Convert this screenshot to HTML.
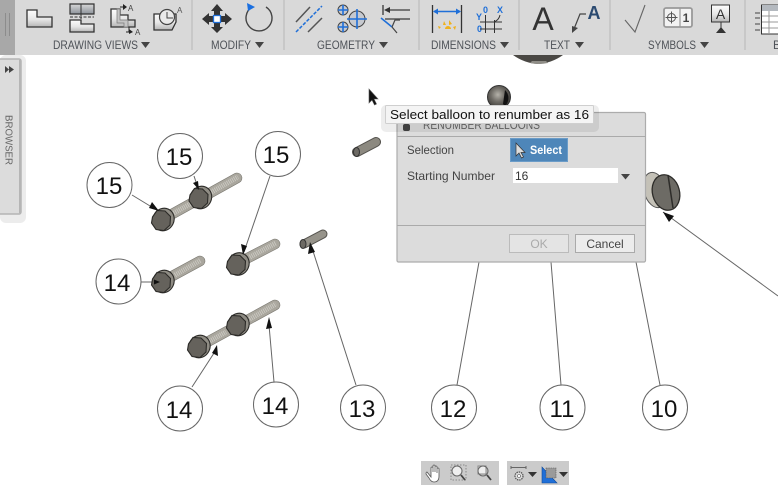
<!DOCTYPE html>
<html lang="en"><head><meta charset="utf-8"><title>Renumber Balloons</title>
<style>
html,body{margin:0;padding:0;background:#fff;width:778px;height:489px;overflow:hidden}
svg{display:block;font-family:"Liberation Sans",sans-serif}
.lb{font-size:11.5px;fill:#4e5258}
.n{font-size:24px;fill:#111;text-anchor:middle}
.c{fill:#fff;stroke:#666;stroke-width:1}
.l{stroke:#666;stroke-width:1;fill:none}
.i{stroke:#333;stroke-width:1.3;fill:url(#g)}
.b{stroke:#1f6fd8;stroke-width:1.6;fill:none}
.sh{stroke:#a9a69d;stroke-width:9.5;stroke-linecap:round;fill:none}
.sd{stroke:#75736c;stroke-width:10.5;stroke-linecap:round;fill:none}
.th{stroke:#c9c7c0;stroke-width:5;stroke-dasharray:1 1;fill:none}
.d{font-size:12px;fill:#444}
</style></head><body>
<svg width="778" height="489" viewBox="0 0 778 489" xmlns="http://www.w3.org/2000/svg">
<defs>
<linearGradient id="g" x1="0" y1="0" x2="0" y2="1"><stop offset="0" stop-color="#fdfdfd"/><stop offset=".55" stop-color="#e6e6e6"/><stop offset="1" stop-color="#b5b5b5"/></linearGradient>
<linearGradient id="g2" x1="0" y1="0" x2="0" y2="1"><stop offset="0" stop-color="#d8d8d8"/><stop offset="1" stop-color="#8d939b"/></linearGradient>
<radialGradient id="ball" cx=".45" cy=".4" r=".6"><stop offset="0" stop-color="#b5b2aa"/><stop offset=".5" stop-color="#6f6c66"/><stop offset="1" stop-color="#3c3a36"/></radialGradient>
<g id="head">
<ellipse cx="1.500" cy="-.5" rx="10.500" ry="11.500" transform="rotate(25 1.500 -.5)" fill="#8f8c84" stroke="#2c2b28" stroke-width="1.100"/>
<path d="M-9.500-3-5-9.500 3-9 8.500-3.500 8 5 2 10.500-6 9.500-10.500 3Z" fill="#65625c" stroke="#2c2b28" stroke-width="1.100"/>
</g>
</defs>

<!-- toolbar -->
<rect x="0" y="0" width="778" height="55" fill="#d9d9d9"/>
<rect x="0" y="0" width="15" height="55" fill="#a8a8a8"/>
<path d="M5.500 13V36M9.500 13V36" stroke="#8c8c8c" stroke-width="1"/>
<path d="M192 0V50M284 0V50M419 0V50M519 0V50M610 0V50M745 0V50" stroke="#c2c2c2" stroke-width="1.500"/>

<!-- drawing views -->
<path class="i" d="M27 10H37V17H52V27H27Z"/>
<path d="M70 4H94V14H70Z" fill="url(#g2)" stroke="#333" stroke-width="1.200"/><path d="M81 4V14" stroke="#333"/>
<path d="M70 17H94" stroke="#333" stroke-dasharray="3 1.500"/><path d="M81 14V20" stroke="#333" stroke-dasharray="2 1"/>
<path class="i" d="M70 20H81V24H94V32H70Z"/>
<path class="i" d="M111 9H120V15H128V20H135V27H111Z"/>
<path d="M117 9H120V20H128V27H124V23H117Z" fill="#c5c5c5" stroke="#777" stroke-width=".7"/>
<path d="M120 7H125M126 32H129V27" stroke="#222" fill="none"/><path d="M123 4 127 7 123 10ZM129 29 133 32 129 34Z" fill="#222"/>
<text x="128" y="11" font-size="8" fill="#444">A</text><text x="135" y="35" font-size="8" fill="#444">A</text>
<path class="i" d="M154 14H176V22L172 30H154Z"/>
<circle cx="167" cy="17" r="7.500" fill="#e9e9e9" stroke="#444" stroke-width="1.200"/><path d="M167 12V18H173" stroke="#444" fill="none"/>
<text x="177" y="13" font-size="8" fill="#555">A</text>
<text class="lb" x="53" y="49" textLength="85" lengthAdjust="spacingAndGlyphs">DRAWING VIEWS</text><path d="M141 42H150L145.500 48Z" fill="#444"/>

<!-- modify -->
<path d="M217 4 223 11H220V27H223L217 33 211 27H214V11H211Z" fill="#333"/>
<path d="M202 19 209 13V16H225V13L232 19 225 25V22H209V25Z" fill="#333"/>
<rect x="213.500" y="15.500" width="7" height="7" fill="#fff" stroke="#1f6fd8" stroke-width="1.300"/>
<path d="M252 7A13 13 0 1 0 266 7" fill="none" stroke="#444" stroke-width="1.400"/>
<path d="M247 3 255 7 248 11Z" fill="#1a6fe0"/>
<text class="lb" x="211" y="49" textLength="40" lengthAdjust="spacingAndGlyphs">MODIFY</text><path d="M255 42H264L259.500 48Z" fill="#444"/>

<!-- geometry -->
<path d="M296 22 310 7M308 32 322 18" stroke="#555" stroke-width="1.500"/>
<path d="M296 32 322 6" stroke="#1f6fd8" stroke-width="1.500" stroke-dasharray="3.500 1.500"/>
<g fill="#c6c9cf" stroke="#444"><circle cx="343" cy="10" r="5"/><circle cx="343" cy="27" r="5"/><circle cx="357" cy="19" r="8"/></g>
<path class="b" d="M338 10H348M343 5V15M338 27H348M343 22V32M347 19H367M357 9V29"/>
<path d="M383 5V15" stroke="#444" stroke-width="1.400"/><path d="M388 10H410M385 19H410" stroke="#555" stroke-width="1.400"/><path d="M384 10 390 7V13Z" fill="#333"/>
<path class="b" d="M381 18 392 27"/><path d="M392 27 397 33M392 27 395 20H400" stroke="#444" stroke-width="1.200" fill="none"/>
<text class="lb" x="317" y="49" textLength="58" lengthAdjust="spacingAndGlyphs">GEOMETRY</text><path d="M379 42H388L383.500 48Z" fill="#444"/>

<!-- dimensions -->
<path d="M432.500 5V33M461.500 5V33" stroke="#333" stroke-width="1.300"/>
<path d="M434 11.500H460" stroke="#1f6fd8" stroke-width="1.500"/><path d="M433 11.500 438 8.500V14.500ZM461 11.500 456 8.500V14.500Z" fill="#1f6fd8"/>
<path d="M439 29 438 26 441 27ZM443 25 444 21 446 25ZM449 25 449 20 452 24ZM453 27 456 26 455 30ZM445 29A3 3 0 0 1 451 29Z" fill="#efb11c"/>
<g font-size="9" font-weight="bold" fill="#1f6fd8"><text x="483" y="13">0</text><text x="497" y="13">X</text><text x="476" y="20">Y</text><text x="477" y="32">0</text></g>
<path d="M485.500 15V33M494.500 20V33M480 22H502M480 29H502M494 22Q499 20 500 15" stroke="#333" fill="none"/>
<text class="lb" x="431" y="49" textLength="65" lengthAdjust="spacingAndGlyphs">DIMENSIONS</text><path d="M500 42H509L504.500 48Z" fill="#444"/>

<!-- text -->
<text x="543" y="30" font-size="32" fill="#333" text-anchor="middle">A</text>
<text x="594" y="19" font-size="18" font-weight="bold" fill="#2b4a70" text-anchor="middle">A</text>
<path d="M586 14H580L574 29" stroke="#444" stroke-width="1.200" fill="none"/><path d="M572 33 572 26 578 28Z" fill="#444"/>
<text class="lb" x="544" y="49" textLength="26" lengthAdjust="spacingAndGlyphs">TEXT</text><path d="M575 42H584L579.500 48Z" fill="#444"/>

<!-- symbols -->
<path d="M625 20 635 32 645 5" stroke="#666" stroke-width="1.100" fill="none"/>
<rect x="664" y="8" width="28" height="19" rx="2" fill="#f2f2f2" stroke="#999" stroke-width="1.800"/><path d="M680 8V27" stroke="#999" stroke-width="1.200"/>
<circle cx="671.500" cy="17.500" r="4" fill="none" stroke="#555"/><path d="M665.500 17.500H677.500M671.500 11.500V23.500" stroke="#555"/>
<text x="686" y="22" font-size="12" font-weight="bold" fill="#444" text-anchor="middle">1</text>
<rect x="711.500" y="5" width="18" height="17" fill="url(#g)" stroke="#333"/><text x="720.500" y="19" font-size="14" fill="#333" text-anchor="middle">A</text>
<path d="M721 22V28" stroke="#333"/><path d="M721 27 726 33H716Z" fill="#333"/>
<text class="lb" x="648" y="49" textLength="48" lengthAdjust="spacingAndGlyphs">SYMBOLS</text><path d="M700 42H709L704.500 48Z" fill="#444"/>

<!-- table -->
<path d="M755 13H760M755 18H760M755 24H760M755 30H760" stroke="#444"/>
<rect x="761.500" y="5" width="20" height="29" fill="#fff" stroke="#333"/><rect x="762" y="5" width="20" height="6" fill="#b4b9bf"/>
<path d="M762 16H778M762 22H778M762 28H778M769 11V34" stroke="#999"/>
<text class="lb" x="773" y="49">B</text>

<!-- top parts -->
<path d="M513 55H563Q552 63 538 64 524 63 513 55Z" fill="#4a4844"/>
<path d="M530 63Q538 65 548 63L546 61H532Z" fill="#8f8d87"/>

<!-- browser -->
<rect x="0" y="55" width="26" height="168" rx="6" fill="#ececec"/>
<rect x="-2" y="59" width="23" height="155" rx="2" fill="#dcdcdc" stroke="#b4b4b4" stroke-width="1.500"/>
<path d="M20 60V213" stroke="#b5b5b5" stroke-width="2"/>
<path d="M5 66 9 69.500 5 73ZM9 66 14 69.500 9 73Z" fill="#444"/>
<text transform="translate(5.500 115) rotate(90)" font-size="10" fill="#666" textLength="50" lengthAdjust="spacingAndGlyphs">BROWSER</text>

<!-- leader lines -->
<path class="l" d="M132 195 155 209M194 176 198 188M270 176 244 252M141 282H160M192 387 216 350M274 382 269 325M356 385 312 248M457 385 479 262M561 385 551 262M660 385 636 262M663 212 778 296"/>

<!-- bolts -->
<path class="sd" d="M165 218 237 178"/><path class="sh" d="M165 218 237 178"/><path class="th" d="M172 214 192 203M208 194 238 177"/>
<use href="#head" transform="translate(162 220)"/><use href="#head" transform="translate(199.500 198)"/>
<path class="sd" d="M240 262 275 244"/><path class="sh" d="M240 262 275 244"/><path class="th" d="M250 257 276 243"/><use href="#head" transform="translate(237 264.500)"/>
<path class="sd" d="M165 280 200 261"/><path class="sh" d="M165 280 200 261"/><path class="th" d="M175 275 201 260"/><use href="#head" transform="translate(162 282)"/>
<path class="sd" d="M200 346 275 305"/><path class="sh" d="M200 346 275 305"/><path class="th" d="M208 342 226 332M248 320 276 304"/>
<use href="#head" transform="translate(198 347)"/><use href="#head" transform="translate(237 325)"/>

<!-- pins -->
<path d="M304 244 323 234" stroke="#55534e" stroke-width="9" stroke-linecap="round"/><path d="M304 244 323 234" stroke="#96938a" stroke-width="7" stroke-linecap="round"/>
<ellipse cx="303" cy="244" rx="3" ry="4.500" fill="#6d6a64" stroke="#333"/>
<path d="M357 152 376 142" stroke="#55534e" stroke-width="10" stroke-linecap="round"/><path d="M357 152 376 142" stroke="#8c8980" stroke-width="8" stroke-linecap="round"/>
<ellipse cx="356.500" cy="152" rx="3" ry="4.500" fill="#6d6a64" stroke="#333"/>

<!-- balloons -->
<circle class="c" cx="109.500" cy="185" r="22.500"/><text class="n" x="109" y="194">15</text>
<circle class="c" cx="180" cy="156" r="22.500"/><text class="n" x="179" y="165">15</text>
<circle class="c" cx="278" cy="154" r="22.500"/><text class="n" x="276" y="163">15</text>
<circle class="c" cx="118.500" cy="281.500" r="22.500"/><text class="n" x="117" y="291">14</text>
<circle class="c" cx="180" cy="408.500" r="22.500"/><text class="n" x="179" y="418">14</text>
<circle class="c" cx="276" cy="404.500" r="22.500"/><text class="n" x="275" y="414">14</text>
<circle class="c" cx="363" cy="407.500" r="22.500"/><text class="n" x="362" y="417">13</text>
<circle class="c" cx="454" cy="407.500" r="22.500"/><text class="n" x="453" y="417">12</text>
<circle class="c" cx="562.500" cy="407.500" r="22.500"/><text class="n" x="562" y="417">11</text>
<circle class="c" cx="665" cy="407.500" r="22.500"/><text class="n" x="664" y="417">10</text>

<!-- ball -->
<circle cx="499" cy="97" r="11.500" fill="url(#ball)" stroke="#333"/><path d="M505 90A11 11 0 0 1 505 106L503 104Z" fill="#111"/>

<!-- right head -->
<ellipse cx="655" cy="190" rx="11" ry="18" fill="#c4c1b7" stroke="#555" transform="rotate(-15 655 190)"/>
<ellipse cx="666" cy="192.500" rx="13.500" ry="18" fill="#6d6b65" stroke="#2d2c29" stroke-width="1.300" transform="rotate(-15 666 192.500)"/>
<path d="M668 175 673 208" stroke="#2d2c29" stroke-width="1.500"/>

<!-- arrowheads -->
<path d="M159 211 149 208 152 202ZM199 190 193 183 198 181ZM243 255 241 244 247 246ZM160 282 154 279.500V284.500ZM217 345 218 356 212 353ZM269 317 272 328 266 329ZM310 242 315 252 308 254ZM663 212 674 216 669 222Z" fill="#111"/>

<!-- dialog -->
<rect x="397" y="112.500" width="248.500" height="149.500" rx="1.500" fill="#dcdcdc" stroke="#acacac" stroke-width="1.200"/>
<path d="M397 136.500H646M397 225.500H646" stroke="#aaa"/>
<text x="423" y="129" font-size="11.500" fill="#666" textLength="117" lengthAdjust="spacingAndGlyphs">RENUMBER BALLOONS</text>
<rect x="403" y="124" width="7" height="7" rx="2" fill="#444"/>
<text class="d" x="407" y="154" textLength="47" lengthAdjust="spacingAndGlyphs">Selection</text>
<text class="d" x="407" y="180" textLength="88" lengthAdjust="spacingAndGlyphs">Starting Number</text>
<rect x="510.500" y="138.500" width="57" height="23" fill="#4e86b9" stroke="#6b9cc8"/>
<path d="M516 143V156L519 153 521.500 158 523.500 157 521 152.500H525Z" fill="#ddd" stroke="#333" stroke-width=".7"/>
<text x="530" y="154" font-size="12" font-weight="bold" fill="#fff" textLength="32" lengthAdjust="spacingAndGlyphs">Select</text>
<rect x="513" y="168" width="105" height="15" fill="#fff"/>
<text x="515" y="180" font-size="12" fill="#333">16</text>
<path d="M621 174H630L625.500 179.500Z" fill="#444"/>
<rect x="509.500" y="234.500" width="59" height="18" fill="#e4e4e4" stroke="#bbb"/>
<text x="539" y="248" font-size="12" fill="#aaa" text-anchor="middle">OK</text>
<rect x="575.500" y="234.500" width="59" height="18" fill="#ececec" stroke="#aaa"/>
<text x="605" y="248" font-size="12" fill="#444" text-anchor="middle">Cancel</text>

<!-- tooltip -->
<rect x="381" y="105" width="218" height="27" rx="5" fill="#000" opacity=".07"/>
<rect x="385.500" y="105.500" width="208" height="18" rx="1" fill="#f4f4f4" stroke="#cfcfcf"/>
<text x="390" y="119" font-size="13" fill="#111" textLength="199" lengthAdjust="spacingAndGlyphs">Select balloon to renumber as 16</text>

<!-- cursor -->
<path d="M369 89V103L372 100 374.500 105 376.500 104 374 99H378Z" fill="#111" stroke="#555" stroke-width=".6"/>

<!-- nav bar -->
<rect x="421" y="461" width="78" height="24" fill="#cbcbcb"/>
<rect x="507" y="461" width="62" height="24" fill="#cbcbcb"/>
<path d="M427 472 431 477V468A1 1 0 0 1 433 468V472 466A1 1 0 0 1 435 466V472 467A1 1 0 0 1 437 467V473 469A1 1 0 0 1 439 469V476Q439 482 434 482 431 482 429 478L426 474Q426 472 427 472Z" fill="#fff" stroke="#555" stroke-width=".8"/>
<rect x="451" y="465" width="15" height="15" fill="none" stroke="#777" stroke-dasharray="1.500 1.500" stroke-width=".8"/>
<circle cx="457" cy="471" r="5" fill="#eee" stroke="#666"/><path d="M461 475 465 480" stroke="#444" stroke-width="1.800"/>
<rect x="478" y="466" width="8" height="8" fill="#eee" stroke="#888"/><circle cx="483" cy="471" r="5" fill="none" stroke="#666"/><path d="M487 475 491 480" stroke="#444" stroke-width="1.800"/>
<path d="M511 466V469M511 467.500H526M526 466V469" stroke="#666"/>
<circle cx="519" cy="476" r="4" fill="#ddd" stroke="#555" stroke-dasharray="1.500 .8" stroke-width="1.300"/><circle cx="519" cy="476" r="1.500" fill="#fff" stroke="#555" stroke-width=".6"/>
<path d="M528 472H537L532.500 477Z" fill="#333"/>
<path d="M542 467V483H557Z" fill="#1f6fd8" stroke="#104a99" stroke-width=".6"/>
<rect x="546" y="468" width="10" height="10" fill="#9a9a9a" stroke="#555" stroke-width=".6" stroke-dasharray="1.500 .8"/>
<path d="M559 472H568L563.500 477Z" fill="#333"/>
</svg>
</body></html>
